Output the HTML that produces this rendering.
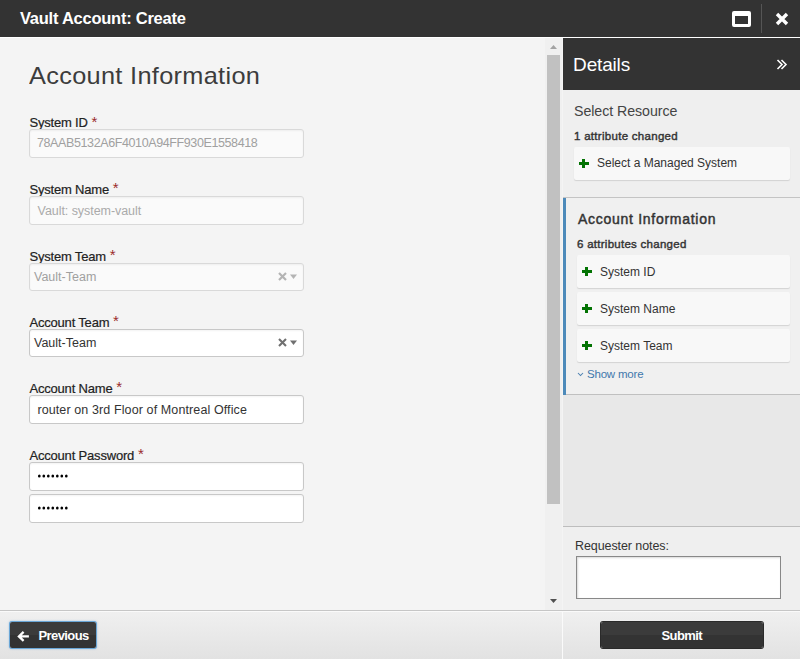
<!DOCTYPE html>
<html><head><meta charset="utf-8">
<style>
*{box-sizing:border-box;margin:0;padding:0}
html,body{width:800px;height:659px;overflow:hidden;font-family:"Liberation Sans",sans-serif;background:#f4f4f4;color:#333}
.a{position:absolute;white-space:nowrap;line-height:1}
#hdr{position:absolute;left:0;top:0;width:800px;height:37px;background:#333}
#hline{position:absolute;left:0;top:37px;width:800px;height:1px;background:#fff}
.t1{left:20px;top:9.9px;font-size:16.5px;font-weight:bold;color:#fff;letter-spacing:-0.25px}
.h1{left:29px;top:64px;font-size:24px;color:#3c3c3c;letter-spacing:0.3px;transform:scaleX(1.055);transform-origin:0 0}
.lbl{left:29.4px;font-size:13px;color:#222;letter-spacing:-0.18px;-webkit-text-stroke:0.2px #222}
.lbl b{color:#9b2b2b;font-weight:normal;font-size:15px;line-height:0;position:relative;top:-0.4px;margin-left:0.3px;-webkit-text-stroke:0}
.inp{position:absolute;left:29px;width:275px;height:29px;border:1px solid #d9d9d9;border-radius:3px;background:#fafafa;box-shadow:inset 0 1px 2px rgba(0,0,0,.05)}
.inp.en{background:#fff;border-color:#c8c8c8}
.itx{font-size:12.5px;color:#a0a0a0}
.itx.en{color:#333}
.sel-x{position:absolute;width:10px;height:10px}
#sbtrack{position:absolute;left:545px;top:38px;width:17px;height:572px;background:#f0f0f0}
#thumb{position:absolute;left:547px;top:55px;width:13px;height:449px;background:#c1c1c1}
#vwhite{position:absolute;left:562px;top:38px;width:1px;height:621px;background:#fafafa}
#det{position:absolute;left:563px;top:38px;width:237px;height:572px;background:#e8e8e8}
#sec1{position:absolute;left:563px;top:90px;width:237px;height:107px;background:#efefef}
#dethdr{position:absolute;left:563px;top:38px;width:237px;height:52px;background:#333}
.dt{left:573.1px;top:55px;font-size:19px;color:#fff;letter-spacing:-0.17px}
.card{position:absolute;background:#f8f8f8;border-radius:2px;box-shadow:0 1px 1px rgba(0,0,0,.12)}
.ctx{font-size:12px;color:#333}
.sec2{position:absolute;left:563px;top:197px;width:237px;height:198px;background:#f0f0f0;border-top:1px solid #c4c4c4;border-bottom:1px solid #c0c0c0}
.bluebar{position:absolute;left:563px;top:198px;width:3px;height:196.5px;background:#4d8aba}
.plus{position:absolute;width:10px;height:9px}
.plus:before{content:"";position:absolute;left:0;top:3.2px;width:10px;height:2.7px;background:#037303}
.plus:after{content:"";position:absolute;left:3.2px;top:0;width:3px;height:9px;background:#037303}
#notes{position:absolute;left:563px;top:526px;width:237px;height:84px;background:#efefef;border-top:1px solid #bdbdbd}
#ta{position:absolute;left:576px;top:556px;width:205px;height:43px;background:#fff;border:1px solid #888;box-shadow:inset 1px 1px 2px rgba(0,0,0,.15)}
#foot{position:absolute;left:0;top:610px;width:800px;height:49px;background:linear-gradient(#f0f0f0,#e2e2e2);border-top:1px solid #c6c6c6}
#footw{position:absolute;left:0;top:611px;width:800px;height:1px;background:#fafafa}
.btn{position:absolute;background:linear-gradient(#3b3b3b 0,#3b3b3b 50%,#333 50%,#333 100%);border-radius:2px}
.bt{font-size:13px;font-weight:bold;color:#fff;letter-spacing:-0.6px}
</style></head><body>
<div id="hdr"></div>
<div id="hline"></div>
<div class="a t1">Vault Account: Create</div>
<!-- maximize icon -->
<div style="position:absolute;left:731.5px;top:10.5px;width:19px;height:16px;border:3px solid #fff;border-top-width:5.5px;border-radius:2px"></div>
<div style="position:absolute;left:761px;top:4px;width:1px;height:29px;background:#555"></div>
<svg style="position:absolute;left:774px;top:11px" width="16" height="16" viewBox="0 0 16 16"><path d="M3 3L13 13M13 3L3 13" stroke="#fff" stroke-width="3.4" stroke-linecap="butt"/></svg>

<div class="a h1">Account Information</div>

<div class="a lbl" style="top:116px">System ID <b>*</b></div>
<div class="inp" style="top:129px"></div>
<div class="a itx" style="left:37px;top:137px;letter-spacing:-0.39px">78AAB5132A6F4010A94FF930E1558418</div>

<div class="a lbl" style="top:182.5px">System Name <b>*</b></div>
<div class="inp" style="top:196px"></div>
<div class="a itx" style="left:37.6px;top:204.5px;color:#aaa;letter-spacing:-0.06px">Vault: system-vault</div>

<div class="a lbl" style="top:249.5px">System Team <b>*</b></div>
<div class="inp" style="top:263px;height:28px"></div>
<div class="a itx" style="left:34px;top:271px">Vault-Team</div>
<svg style="position:absolute;left:277px;top:271px" width="22" height="12" viewBox="0 0 22 12"><path d="M2 2L9 9M9 2L2 9" stroke="#b4b4b4" stroke-width="2.2"/><path d="M13 3.5H20L16.5 8Z" fill="#b4b4b4"/></svg>

<div class="a lbl" style="top:315.5px">Account Team <b>*</b></div>
<div class="inp en" style="top:329px;height:28px"></div>
<div class="a itx en" style="left:34px;top:337px">Vault-Team</div>
<svg style="position:absolute;left:277px;top:337px" width="22" height="12" viewBox="0 0 22 12"><path d="M2 2L9 9M9 2L2 9" stroke="#707070" stroke-width="2.1"/><path d="M13 3.5H20L16.5 8Z" fill="#707070"/></svg>

<div class="a lbl" style="top:381.5px">Account Name <b>*</b></div>
<div class="inp en" style="top:395px"></div>
<div class="a itx en" style="left:37.4px;top:404px;letter-spacing:0.11px">router on 3rd Floor of Montreal Office</div>

<div class="a lbl" style="top:448.5px">Account Password <b>*</b></div>
<div class="inp en" style="top:462px"></div>
<svg style="position:absolute;left:0;top:473px" width="80" height="8"><ellipse cx="39.30" cy="3" rx="1.35" ry="1.55" fill="#000"/><ellipse cx="43.80" cy="3" rx="1.35" ry="1.55" fill="#000"/><ellipse cx="48.30" cy="3" rx="1.35" ry="1.55" fill="#000"/><ellipse cx="52.80" cy="3" rx="1.35" ry="1.55" fill="#000"/><ellipse cx="57.30" cy="3" rx="1.35" ry="1.55" fill="#000"/><ellipse cx="61.80" cy="3" rx="1.35" ry="1.55" fill="#000"/><ellipse cx="66.30" cy="3" rx="1.35" ry="1.55" fill="#000"/></svg>
<div class="inp en" style="top:494px"></div>
<svg style="position:absolute;left:0;top:505px" width="80" height="8"><ellipse cx="39.30" cy="3" rx="1.35" ry="1.55" fill="#000"/><ellipse cx="43.80" cy="3" rx="1.35" ry="1.55" fill="#000"/><ellipse cx="48.30" cy="3" rx="1.35" ry="1.55" fill="#000"/><ellipse cx="52.80" cy="3" rx="1.35" ry="1.55" fill="#000"/><ellipse cx="57.30" cy="3" rx="1.35" ry="1.55" fill="#000"/><ellipse cx="61.80" cy="3" rx="1.35" ry="1.55" fill="#000"/><ellipse cx="66.30" cy="3" rx="1.35" ry="1.55" fill="#000"/></svg>

<div id="sbtrack"></div><div id="thumb"></div>
<svg style="position:absolute;left:549px;top:44px" width="9" height="6" viewBox="0 0 9 6"><path d="M1 5H8L4.5 1Z" fill="#a3a3a3"/></svg>
<svg style="position:absolute;left:549px;top:598px" width="9" height="6" viewBox="0 0 9 6"><path d="M1 1H8L4.5 5Z" fill="#505050"/></svg>

<div id="det"></div>
<div id="sec1"></div>
<div id="dethdr"></div>
<div class="a dt">Details</div>
<svg style="position:absolute;left:776px;top:59px" width="13" height="12" viewBox="0 0 13 12"><path d="M1.5 1L6 5.5L1.5 10M5.5 1L10 5.5L5.5 10" stroke="#fff" stroke-width="1.6" fill="none"/></svg>

<div class="a" style="left:574px;top:104px;font-size:14.2px;color:#444;letter-spacing:-0.05px">Select Resource</div>
<div class="a" style="left:574px;top:131px;font-size:11.5px;font-weight:normal;-webkit-text-stroke:0.4px #333;color:#333;letter-spacing:0.29px">1 attribute changed</div>
<div class="card" style="left:574px;top:147px;width:216px;height:33px"></div>
<div class="plus" style="left:579px;top:159px"></div>
<div class="a ctx" style="left:597px;top:157px">Select a Managed System</div>

<div class="sec2"></div>
<div class="bluebar"></div>
<div class="a" style="left:578px;top:212px;font-size:14px;font-weight:normal;-webkit-text-stroke:0.45px #333;color:#333;letter-spacing:0.72px">Account Information</div>
<div class="a" style="left:577px;top:238.7px;font-size:11.5px;font-weight:normal;-webkit-text-stroke:0.4px #333;color:#333;letter-spacing:0.27px">6 attributes changed</div>
<div class="card" style="left:577px;top:255px;width:213px;height:33px"></div>
<div class="plus" style="left:582px;top:267px"></div>
<div class="a ctx" style="left:600px;top:266px">System ID</div>
<div class="card" style="left:577px;top:292px;width:213px;height:33px"></div>
<div class="plus" style="left:582px;top:304px"></div>
<div class="a ctx" style="left:600px;top:303px">System Name</div>
<div class="card" style="left:577px;top:329px;width:213px;height:33px"></div>
<div class="plus" style="left:582px;top:341px"></div>
<div class="a ctx" style="left:600px;top:340px">System Team</div>
<svg style="position:absolute;left:577px;top:372px" width="7" height="5" viewBox="0 0 7 5"><path d="M1 1L3.5 3.5L6 1" stroke="#4a7fb0" stroke-width="1.05" fill="none"/></svg>
<div class="a" style="left:587px;top:368.5px;font-size:11.5px;color:#3f78ad;letter-spacing:-0.2px">Show more</div>

<div id="notes"></div>
<div class="a" style="left:575px;top:539.5px;font-size:12.5px;color:#333;letter-spacing:-0.08px">Requester notes:</div>
<div id="ta"></div>

<div id="foot"></div>
<div id="footw"></div>
<div style="position:absolute;left:562px;top:611px;width:1px;height:48px;background:#fafafa"></div>

<div class="btn" style="left:10px;top:622px;width:86px;height:26px;box-shadow:0 0 0 1px #6aa6d6,0 0 2px 1px rgba(90,160,220,.5)"></div>
<svg style="position:absolute;left:17px;top:630px" width="13" height="13" viewBox="0 0 13 13"><path d="M6.6 1.9L1.9 6.4L6.6 10.9M2.5 6.4H11.9" stroke="#fff" stroke-width="2.3" fill="none"/></svg>
<div class="a bt" style="left:38.5px;top:629px">Previous</div>

<div class="btn" style="left:601px;top:622px;width:162px;height:26px;box-shadow:0 0 0 1px #2a2a2a"></div>
<div class="a bt" style="left:661.5px;top:629px">Submit</div>
</body></html>
